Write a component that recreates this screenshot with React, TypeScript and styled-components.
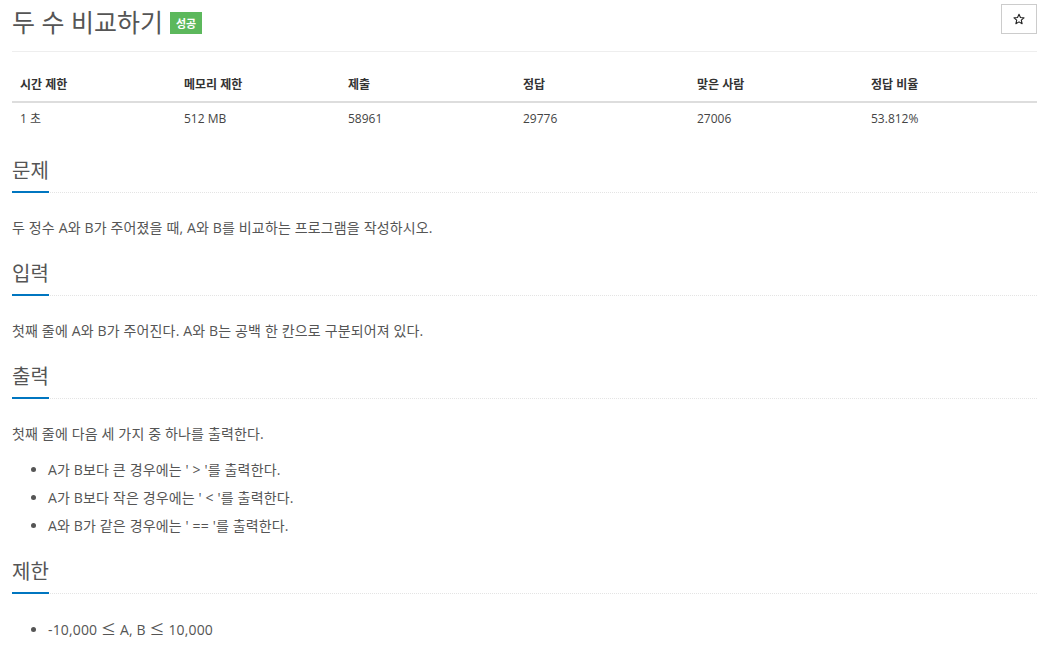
import styled, { createGlobalStyle } from "styled-components";

const GlobalStyle = createGlobalStyle`
	body {
		margin: 0;
		background: #fff;
		color: #555;
		font-family: "Open Sans", "Noto Sans CJK KR", sans-serif;
		font-size: 14px;
	}
`;

const Page = styled.div`
	padding: 0 10px 0 12px;
`;

const TitleRow = styled.div`
	display: flex;
	align-items: flex-start;
`;

const Title = styled.h1`
	margin: 0;
	font-size: 25px;
	font-weight: 400;
	line-height: 44px;
	color: #555;
`;

const Badge = styled.span`
	align-self: center;
	margin: 2px 0 0 7px;
	height: 22px;
	padding: 0 6px;
	display: flex;
	align-items: center;
	background: #5cb85c;
	color: #fff;
	font-size: 11px;
	font-weight: 700;
`;

const StarButton = styled.button`
	margin: 4px 0 0 auto;
	width: 36px;
	height: 30px;
	display: flex;
	align-items: center;
	justify-content: center;
	border: 1px solid #ccc;
	background: #fff;
	padding: 0;
	cursor: pointer;
`;

const Rule = styled.hr`
	margin: 7px 0 0;
	border: 0;
	border-top: 1px solid #eee;
`;

const Table = styled.table`
	width: 100%;
	margin-top: 16px;
	border-collapse: collapse;
	table-layout: fixed;
	font-size: 12px;
`;

const Th = styled.th<{ $w?: number }>`
	width: ${(p) => (p.$w ? `${p.$w}px` : "auto")};
	padding: 8px;
	line-height: 17px;
	text-align: left;
	font-weight: 700;
	color: #333;
	border-bottom: 2px solid #ddd;
`;

const Td = styled.td`
	padding: 8px;
	line-height: 16px;
	color: #444;
`;

const Section = styled.section`
	margin-top: 25px;
`;

const Headline = styled.div`
	display: flex;
	border-bottom: 1px dotted #e4e4e4;
`;

const SectionTitle = styled.h2`
	margin: 0 0 -1px;
	padding-bottom: 9px;
	font-size: 20px;
	font-weight: 400;
	line-height: 22px;
	color: #555;
	border-bottom: 2px solid #0076c0;
`;

const Text = styled.p`
	margin: 25px 0 0;
	line-height: 20px;
	letter-spacing: 0.15px;
`;

const List = styled.ul<{ $top: number }>`
	margin: ${(p) => p.$top}px 0 6px;
	padding-left: 36px;
	line-height: 20px;
	letter-spacing: 0.15px;

	li + li {
		margin-top: 8px;
	}
`;

const Le = styled.span`
	font-family: "Noto Sans CJK KR", sans-serif;
	font-size: 15px;
`;

const cols = [
	{ head: "시간 제한", value: "1 초", w: 148 },
	{ head: "메모리 제한", value: "512 MB", w: 148 },
	{ head: "제출", value: "58961", w: 159 },
	{ head: "정답", value: "29776", w: 158 },
	{ head: "맞은 사람", value: "27006", w: 158 },
	{ head: "정답 비율", value: "53.812%" },
];

export default function App() {
	return (
		<Page>
			<GlobalStyle />
			<TitleRow>
				<Title>두 수 비교하기</Title>
				<Badge>성공</Badge>
				<StarButton aria-label="즐겨찾기">
					<svg width="12" height="12" viewBox="0 0 24 24">
						<path
							d="M12 2.5l2.9 6.6 7.1.6-5.4 4.7 1.6 7-6.2-3.7-6.2 3.7 1.6-7L2 9.7l7.1-.6z"
							fill="none"
							stroke="#222"
							strokeWidth="2.2"
							strokeLinejoin="round"
						/>
					</svg>
				</StarButton>
			</TitleRow>
			<Rule />
			<Table>
				<thead>
					<tr>
						{cols.map((c) => (
							<Th key={c.head} $w={c.w}>
								{c.head}
							</Th>
						))}
					</tr>
				</thead>
				<tbody>
					<tr>
						{cols.map((c) => (
							<Td key={c.head}>{c.value}</Td>
						))}
					</tr>
				</tbody>
			</Table>

			<Section>
				<Headline>
					<SectionTitle>문제</SectionTitle>
				</Headline>
				<Text>두 정수 A와 B가 주어졌을 때, A와 B를 비교하는 프로그램을 작성하시오.</Text>
			</Section>

			<Section>
				<Headline>
					<SectionTitle>입력</SectionTitle>
				</Headline>
				<Text>첫째 줄에 A와 B가 주어진다. A와 B는 공백 한 칸으로 구분되어져 있다.</Text>
			</Section>

			<Section>
				<Headline>
					<SectionTitle>출력</SectionTitle>
				</Headline>
				<Text>첫째 줄에 다음 세 가지 중 하나를 출력한다.</Text>
				<List $top={16}>
					<li>A가 B보다 큰 경우에는 ' &gt; '를 출력한다.</li>
					<li>A가 B보다 작은 경우에는 ' &lt; '를 출력한다.</li>
					<li>A와 B가 같은 경우에는 ' == '를 출력한다.</li>
				</List>
			</Section>

			<Section>
				<Headline>
					<SectionTitle>제한</SectionTitle>
				</Headline>
				<List $top={25}>
					<li>
						-10,000 <Le>≤</Le> A, B <Le>≤</Le> 10,000
					</li>
				</List>
			</Section>
		</Page>
	);
}
